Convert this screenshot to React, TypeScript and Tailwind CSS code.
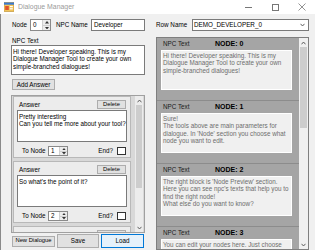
import React from "react";

function AppIcon() {
  return (
    <svg width="10" height="10" viewBox="0 0 10 10">
      <rect x="0" y="0.5" width="10" height="9" fill="#f2c45a" stroke="#b88a2a" strokeWidth="0.6" />
      <rect x="0" y="0.5" width="10" height="2.2" fill="#3b7bd0" />
      <rect x="1.2" y="4" width="3.6" height="4" fill="#e0522b" />
      <rect x="5.8" y="4" width="3" height="1.2" fill="#ffffff" />
      <rect x="5.8" y="6.2" width="3" height="1.2" fill="#ffffff" />
    </svg>
  );
}

function Chevron({ up }: { up?: boolean }) {
  return (
    <svg width="5" height="4" viewBox="0 0 5 4">
      <path
        d={up ? "M0.5 3.3 L2.5 1 L4.5 3.3" : "M0.5 0.8 L2.5 3 L4.5 0.8"}
        stroke="#505050"
        strokeWidth="0.9"
        fill="none"
      />
    </svg>
  );
}

function Spin({ value, w }: { value: string; w: string }) {
  return (
    <div className={`flex h-full bg-white border border-[#8a8a8a] ${w}`}>
      <div className="flex-1 flex items-center pl-[2px]">{value}</div>
      <div className="w-[8px] flex flex-col bg-[#ececec] border-l border-[#d0d0d0]">
        <div className="flex-1 flex items-center justify-center border-b border-[#d0d0d0]">
          <svg width="4" height="2.5" viewBox="0 0 4 2.5">
            <path d="M0 2.5 L2 0 L4 2.5Z" fill="#333" />
          </svg>
        </div>
        <div className="flex-1 flex items-center justify-center">
          <svg width="4" height="2.5" viewBox="0 0 4 2.5">
            <path d="M0 0 L2 2.5 L4 0Z" fill="#333" />
          </svg>
        </div>
      </div>
    </div>
  );
}

function AnswerBlock({ lines, node }: { lines: string[]; node: string }) {
  return (
    <div className="shrink-0 w-[118px] h-[62px] bg-[#ececec] border border-[#b8b8b8] flex flex-col">
      <div className="mt-[3px] h-[9px] flex items-center">
        <span className="pl-[5px]">Answer</span>
        <div className="ml-auto mr-[4px] w-[29px] h-[9px] bg-[#e1e1e1] border border-[#adadad] flex items-center justify-center text-[5.8px]">
          Delete
        </div>
      </div>
      <div className="mt-[1px] mx-[3px] h-[32px] bg-white border border-[#7a7a7a] pl-[1px] pt-[2px]">
        {lines.map((l, i) => (
          <div key={i} className="whitespace-nowrap">
            {l}
          </div>
        ))}
      </div>
      <div className="mt-[4px] h-[10px] flex items-center">
        <span className="pl-[8px] w-[34px]">To Node</span>
        <Spin value={node} w="w-[20px]" />
        <span className="ml-auto">End?</span>
        <div className="ml-[4px] mr-[4px] w-[9px] h-[8px] bg-white border border-[#333]" />
      </div>
    </div>
  );
}

function NodeBlock({ n, lines }: { n: string; lines: string[] }) {
  return (
    <div className="shrink-0 h-[63px] bg-[#a5a5a5] border-b border-[#8c8c8c] flex flex-col">
      <div className="h-[12px] flex items-center">
        <span className="w-[58px] pl-[6px] text-[#1a1a1a]">NPC Text</span>
        <span className="font-bold text-[7px]">NODE: {n}</span>
      </div>
      <div className="ml-[4px] w-[131px] h-[40px] bg-[#f0f0f0] border border-white text-[#6d6d6d] pl-[1px] pt-[1px]">
        {lines.map((l, i) => (
          <div key={i} className="whitespace-nowrap">
            {l}
          </div>
        ))}
      </div>
    </div>
  );
}

export default function App() {
  return (
    <div className="w-[315px] h-[250px] overflow-hidden bg-[#f0f0f0] flex flex-col font-['Liberation_Sans',Arial,sans-serif] text-[6.3px] leading-[7.3px] text-black">
      <div className="h-[14px] bg-white flex items-center shrink-0">
        <div className="ml-[4px] w-[10px] h-[10px]">
          <AppIcon />
        </div>
        <span className="ml-[4px] text-[6.9px] text-[#9a9a9a]">Dialogue Manager</span>
        <div className="ml-auto flex items-center h-full">
          <div className="w-[7px] h-px bg-[#777] mr-[20px]" />
          <div className="w-[7px] h-[7px] border border-[#777] mr-[19px]" />
          <svg width="8" height="8" viewBox="0 0 8 8">
            <path d="M0.5 0.5 L7.5 7.5 M7.5 0.5 L0.5 7.5" stroke="#777" strokeWidth="0.8" />
          </svg>
          <div className="w-[9px]" />
        </div>
      </div>
      <div className="flex-1 flex min-h-0 border-l border-[#8a8a8a]">
        <div className="ml-[10px] w-[134px] pt-[5px] flex flex-col">
          <div className="h-[12px] flex items-center">
            <span className="w-[19px] pl-[1px]">Node</span>
            <Spin value="0" w="w-[21px]" />
            <span className="w-[40px] pl-[5px]">NPC Name</span>
            <div className="flex-1 h-full bg-white border border-[#7a7a7a] flex items-center pl-[2px]">
              Developer
            </div>
          </div>
          <div className="mt-[6px] h-[7px] leading-[7px] pl-[1px]">NPC Text</div>
          <div className="mt-[1px] h-[30px] bg-white border border-[#7a7a7a] pl-[1px] pt-[2px]">
            <div className="whitespace-nowrap">Hi there! Developer speaking. This is my</div>
            <div className="whitespace-nowrap">Dialogue Manager Tool to create your own</div>
            <div className="whitespace-nowrap">simple-branched dialogues!</div>
          </div>
          <div className="mt-[4px] ml-[1px] w-[43px] h-[11px] bg-[#e1e1e1] border border-[#adadad] flex items-center justify-center">
            Add Answer
          </div>
          <div className="mt-[5px] h-[138px] border border-[#a0a0a0] bg-[#d8d8d8] flex overflow-hidden">
            <div className="w-[123px] pl-[1px] flex flex-col gap-[3px] overflow-hidden">
              <AnswerBlock lines={["Pretty interesting", "Can you tell me more about your tool?"]} node="1" />
              <AnswerBlock lines={["So what's the point of it?"]} node="2" />
              <AnswerBlock lines={[""]} node="3" />
            </div>
            <div className="w-[8px] flex flex-col bg-[#ececec]">
              <div className="h-[9px] flex items-center justify-center">
                <Chevron up />
              </div>
              <div className="h-[83px] mx-[1px] bg-[#cdcdcd]" />
              <div className="flex-1" />
              <div className="h-[9px] flex items-center justify-center">
                <Chevron />
              </div>
            </div>
          </div>
          <div className="mt-[1px] h-[14px] flex items-center">
            <div className="ml-[1px] w-[43px] h-[11px] bg-[#e1e1e1] border border-[#adadad] flex items-center justify-center text-[5.8px]">
              New Dialogue
            </div>
            <div className="ml-[2px] w-[42px] h-[14px] bg-[#e1e1e1] border border-[#adadad] flex items-center justify-center">
              Save
            </div>
            <div className="ml-[2px] w-[43px] h-[14px] bg-[#e5f1fb] border border-[#0078d7] flex items-center justify-center">
              Load
            </div>
          </div>
        </div>
        <div className="ml-[11px] w-[153px] pt-[5px] flex flex-col min-h-0">
          <div className="h-[12px] flex items-center shrink-0">
            <span className="w-[36px]">Row Name</span>
            <div className="flex-1 h-full bg-white border border-[#7a7a7a] flex items-center pl-[1px]">
              <span>DEMO_DEVELOPER_0</span>
              <div className="ml-auto mr-[3px]">
                <Chevron />
              </div>
            </div>
          </div>
          <div className="mt-[6px] flex-1 min-h-0 border border-[#7f7f7f] bg-[#8f8f8f] flex overflow-hidden">
            <div className="w-[142px] flex flex-col overflow-hidden">
              <NodeBlock
                n="0"
                lines={[
                  "Hi there! Developer speaking. This is my",
                  "Dialogue Manager Tool to create your own",
                  "simple-branched dialogues!",
                ]}
              />
              <NodeBlock
                n="1"
                lines={[
                  "Sure!",
                  "The tools above are main parameters for",
                  "dialogue. In 'Node' section you choose what",
                  "node you want to edit.",
                ]}
              />
              <NodeBlock
                n="2"
                lines={[
                  "The right block is 'Node Preview' section.",
                  "Here you can see npc's texts that help you to",
                  "find the right node!",
                  "What else do you want to know?",
                ]}
              />
              <NodeBlock
                n="3"
                lines={[
                  "You can edit your nodes here. Just choose",
                  "what node you need in the 'Node' field.",
                ]}
              />
            </div>
            <div className="flex-1 flex flex-col bg-[#f0f0f0]">
              <div className="h-[9px] flex items-center justify-center">
                <Chevron up />
              </div>
              <div className="h-[81px] mx-[1px] bg-[#cdcdcd]" />
              <div className="flex-1" />
              <div className="h-[9px] flex items-center justify-center">
                <Chevron />
              </div>
            </div>
          </div>
        </div>
      </div>
    </div>
  );
}
